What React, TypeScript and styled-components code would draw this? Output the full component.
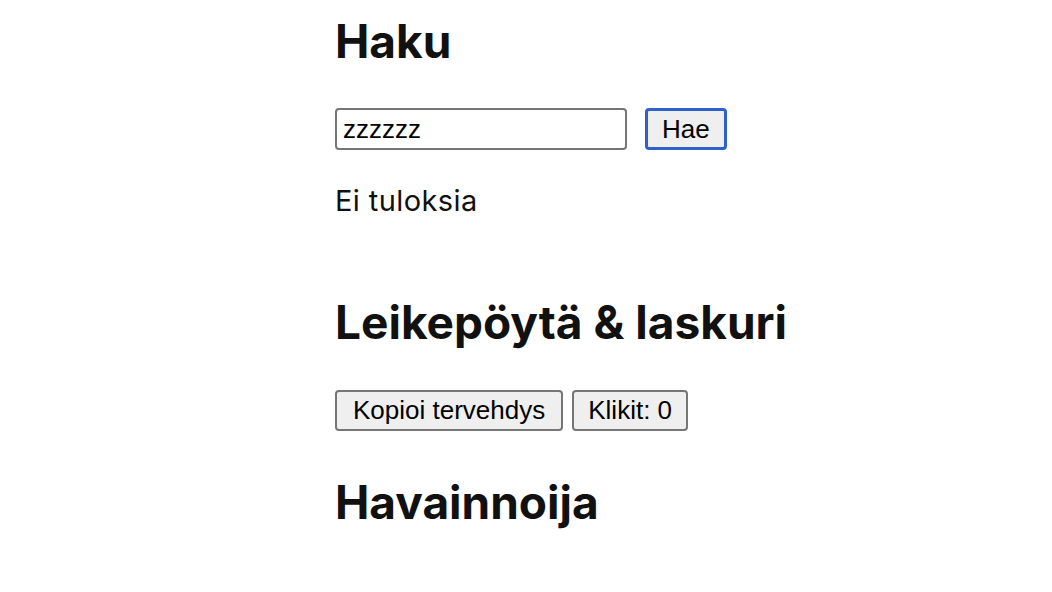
import React from "react";
import styled, { createGlobalStyle } from "styled-components";

const Global = createGlobalStyle`
  html, body { margin: 0; padding: 0; background: #ffffff; }
  body { font-family: Inter, "Noto Sans", sans-serif; color: #111111; }
`;

const Page = styled.main`
  padding: 0 0 0 335px;
  display: flex;
  flex-direction: column;
  align-items: flex-start;
`;

const Section = styled.section`
  display: flex;
  flex-direction: column;
  align-items: flex-start;
`;

const Heading = styled.h1<{ $top: number }>`
  margin: ${(p) => p.$top}px 0 0 0;
  font-family: Inter, "Noto Sans", sans-serif;
  font-weight: 700;
  font-size: 46px;
  line-height: 58px;
  color: #111111;
  white-space: nowrap;
`;

const Row = styled.div<{ $gap: number; $top: number }>`
  display: flex;
  align-items: center;
  gap: ${(p) => p.$gap}px;
  margin-top: ${(p) => p.$top}px;
`;

const Input = styled.input`
  box-sizing: border-box;
  width: 292px;
  height: 42px;
  padding: 0 6px;
  border: 2px solid #767676;
  border-radius: 4px;
  font-family: "Liberation Sans", Arial, sans-serif;
  font-size: 26px;
  color: #000000;
  background: #ffffff;
  outline: none;
`;

const Button = styled.button<{ $focused?: boolean; $pad: number }>`
  box-sizing: border-box;
  height: ${(p) => (p.$focused ? 42 : 41)}px;
  padding: 0 ${(p) => p.$pad}px;
  border: ${(p) => (p.$focused ? "3px solid #2f62c9" : "2px solid #767676")};
  border-radius: 4px;
  background: #efefef;
  font-family: "Liberation Sans", Arial, sans-serif;
  font-size: 26px;
  color: #000000;
  cursor: pointer;
`;

const Text = styled.p`
  margin: 34px 0 0 0;
  font-family: Inter, "Noto Sans", sans-serif;
  font-size: 29px;
  line-height: 34px;
  letter-spacing: 0.4px;
  color: #111111;
`;

export default function App() {
  return (
    <>
      <Global />
      <Page>
        <Section>
          <Heading $top={12}>Haku</Heading>
          <Row $gap={18} $top={38}>
            <Input defaultValue="zzzzzz" />
            <Button $focused $pad={14}>Hae</Button>
          </Row>
          <Text>Ei tuloksia</Text>
        </Section>
        <Section>
          <Heading $top={75}>Leikepöytä &amp; laskuri</Heading>
          <Row $gap={9} $top={39}>
            <Button $pad={16}>Kopioi tervehdys</Button>
            <Button $pad={14}>Klikit: 0</Button>
          </Row>
        </Section>
        <Section>
          <Heading $top={42}>Havainnoija</Heading>
        </Section>
      </Page>
    </>
  );
}
